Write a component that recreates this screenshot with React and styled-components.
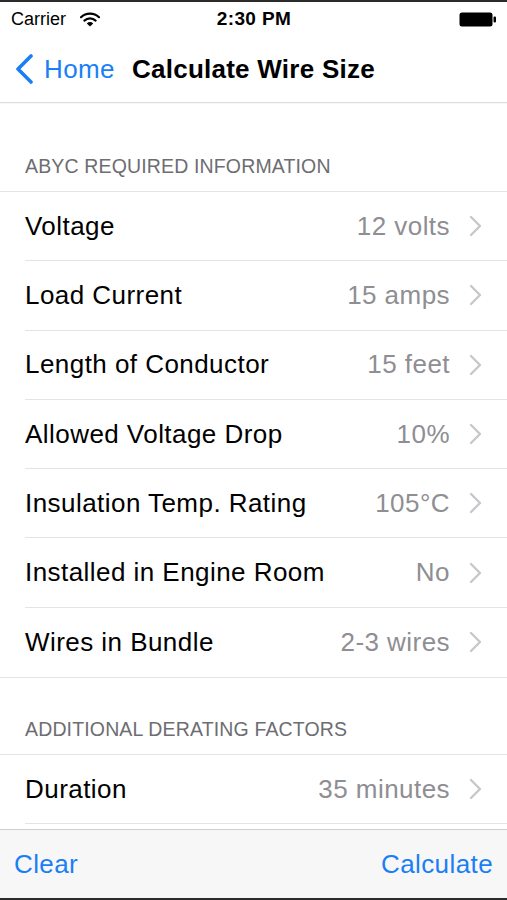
import React from "react";
import styled, { createGlobalStyle } from "styled-components";

const GlobalStyle = createGlobalStyle`
    html, body {
        margin: 0;
        padding: 0;
        background: #FFFFFF;
    }
    * {
        box-sizing: border-box;
    }
`

const BLUE = '#1a7ff6'

const Phone = styled.div`
    width: 507px;
    height: 900px;
    display: flex;
    flex-direction: column;
    background: #FFFFFF;
    border-top: 2px solid #2b2b2b;
    border-bottom: 2px solid #2b2b2b;
    font-family: 'Liberation Sans', Arial, sans-serif;
    overflow: hidden;
`

const StatusBar = styled.div`
    height: 34px;
    flex-shrink: 0;
    display: grid;
    grid-template-columns: 1fr auto 1fr;
    align-items: center;
    padding: 0 10px 0 11px;
    font-size: 18px;
    color: #000000;
`

const StatusLeft = styled.div`
    display: flex;
    align-items: center;
    gap: 14px;
`

const Clock = styled.div`
    font-size: 19px;
    font-weight: bold;
    letter-spacing: 0.4px;
`

const StatusRight = styled.div`
    display: flex;
    justify-content: flex-end;
    align-items: center;
`

const NavBar = styled.div`
    height: 67px;
    flex-shrink: 0;
    display: flex;
    align-items: center;
    padding: 0 14px 0 14px;
    border-bottom: 1px solid #dcdcdc;
    box-shadow: 0 1px 1px rgba(0, 0, 0, 0.03);
`

const BackButton = styled.div`
    display: flex;
    align-items: center;
    gap: 9px;
    color: ${BLUE};
    font-size: 26px;
    letter-spacing: 0.4px;
    cursor: pointer;
`

const Title = styled.div`
    margin-left: 17px;
    font-size: 26px;
    font-weight: bold;
    letter-spacing: 0.25px;
    color: #000000;
`

const Content = styled.div`
    flex: 1;
    overflow: hidden;
`

const SectionHeader = styled.div`
    height: ${props => props.height}px;
    display: flex;
    align-items: flex-end;
    padding: 0 25px 13px 25px;
    font-size: 19.5px;
    color: #6d6d72;
    letter-spacing: 0.15px;
`

const Section = styled.div`
    border-top: 1px solid #e4e4e4;
    border-bottom: ${props => props.open ? 'none' : '1px solid #e4e4e4'};
`

const Row = styled.div`
    height: 69.3px;
    padding-left: 25px;
`

const RowInner = styled.div`
    height: 100%;
    display: flex;
    align-items: center;
    padding-right: 24px;
    border-bottom: ${props => props.last ? 'none' : '1px solid #e4e4e4'};
`

const Label = styled.div`
    font-size: 26px;
    letter-spacing: 0.45px;
    color: #000000;
`

const Value = styled.div`
    margin-left: auto;
    font-size: 26px;
    letter-spacing: 0.45px;
    color: #8e8e93;
`

const Disclosure = styled.svg`
    margin-left: 19px;
    flex-shrink: 0;
`

const Toolbar = styled.div`
    height: 69px;
    flex-shrink: 0;
    display: flex;
    align-items: center;
    justify-content: space-between;
    padding: 0 14px;
    background: #f7f7f7;
    border-top: 1px solid #cfcfcf;
`

const ToolButton = styled.div`
    font-size: 26px;
    letter-spacing: 0.4px;
    color: ${BLUE};
    cursor: pointer;
`

const WifiIcon = () => (
    <svg width="20" height="15" viewBox="0 0 20 15">
        <path d="M1 5.2 A13 13 0 0 1 19 5.2" fill="none" stroke="#000" strokeWidth="2.2" strokeLinecap="round"/>
        <path d="M4.4 8.6 A8.2 8.2 0 0 1 15.6 8.6" fill="none" stroke="#000" strokeWidth="2.2" strokeLinecap="round"/>
        <path d="M10 14.5 L6.8 11.4 A4.6 4.6 0 0 1 13.2 11.4 Z" fill="#000"/>
    </svg>
)

const BatteryIcon = () => (
    <svg width="38" height="15" viewBox="0 0 38 15">
        <rect x="0.5" y="0.5" width="33" height="14" rx="2.5" fill="#000"/>
        <rect x="34.5" y="4.5" width="2.5" height="6" rx="1" fill="#000"/>
    </svg>
)

const BackChevron = () => (
    <svg width="21" height="30" viewBox="0 0 21 30">
        <polyline points="17,2 4,15 17,28" fill="none" stroke={BLUE} strokeWidth="3.6" strokeLinecap="round" strokeLinejoin="round"/>
    </svg>
)

const Chevron = () => (
    <Disclosure width="14" height="22" viewBox="0 0 14 22">
        <polyline points="2,2 11,11 2,20" fill="none" stroke="#c7c7cc" strokeWidth="2.4" strokeLinecap="round" strokeLinejoin="round"/>
    </Disclosure>
)

const required = [
    { label: 'Voltage', value: '12 volts' },
    { label: 'Load Current', value: '15 amps' },
    { label: 'Length of Conductor', value: '15 feet' },
    { label: 'Allowed Voltage Drop', value: '10%' },
    { label: 'Insulation Temp. Rating', value: '105°C' },
    { label: 'Installed in Engine Room', value: 'No' },
    { label: 'Wires in Bundle', value: '2-3 wires' },
]

const derating = [
    { label: 'Duration', value: '35 minutes' },
]

const SettingRow = ({ label, value, last }) => (
    <Row>
        <RowInner last={last}>
            <Label>{label}</Label>
            <Value>{value}</Value>
            <Chevron/>
        </RowInner>
    </Row>
)

const App = () => {
    return (
        <Phone>
            <GlobalStyle/>
            <StatusBar>
                <StatusLeft>
                    <span>Carrier</span>
                    <WifiIcon/>
                </StatusLeft>
                <Clock>2:30 PM</Clock>
                <StatusRight>
                    <BatteryIcon/>
                </StatusRight>
            </StatusBar>
            <NavBar>
                <BackButton>
                    <BackChevron/>
                    Home
                </BackButton>
                <Title>Calculate Wire Size</Title>
            </NavBar>
            <Content>
                <SectionHeader height={88}>ABYC REQUIRED INFORMATION</SectionHeader>
                <Section>
                    {required.map((item, i) => (
                        <SettingRow key={item.label} {...item} last={i === required.length - 1}/>
                    ))}
                </Section>
                <SectionHeader height={76}>ADDITIONAL DERATING FACTORS</SectionHeader>
                <Section open>
                    {derating.map(item => (
                        <SettingRow key={item.label} {...item}/>
                    ))}
                </Section>
            </Content>
            <Toolbar>
                <ToolButton>Clear</ToolButton>
                <ToolButton>Calculate</ToolButton>
            </Toolbar>
        </Phone>
    )
}

export default App;
